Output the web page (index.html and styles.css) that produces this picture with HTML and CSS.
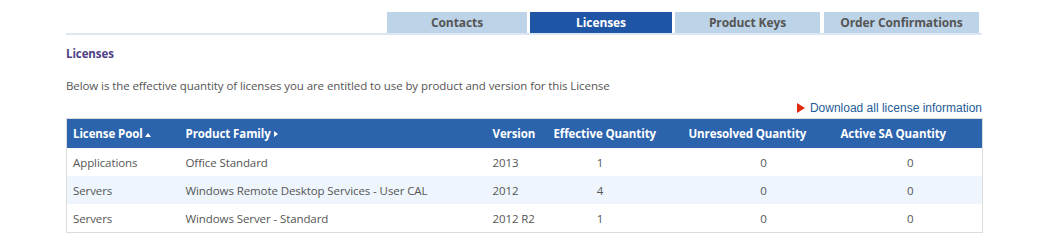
FILE: index.html
```html
<!DOCTYPE html>
<html lang="en">
<head>
    <meta charset="UTF-8">
    <title>Licenses</title>
    <link rel="stylesheet" href="styles.css">
</head>
<body>
    <div class="page">
        <div class="tabs">
            <div class="tab tab-contacts">Contacts</div>
            <div class="tab tab-licenses active">Licenses</div>
            <div class="tab tab-keys">Product Keys</div>
            <div class="tab tab-orders">Order Confirmations</div>
        </div>
        <h2 class="title">Licenses</h2>
        <p class="intro">Below is the effective quantity of licenses you are entitled to use by product and version for this License</p>
        <div class="download">
            <span class="arrow"></span><a href="#">Download all license information</a>
        </div>
        <table class="grid">
            <colgroup>
                <col style="width: 113px">
                <col style="width: 307px">
                <col style="width: 61px">
                <col style="width: 135px">
                <col style="width: 152px">
                <col style="width: 148px">
            </colgroup>
            <thead>
                <tr>
                    <th>License Pool<span class="sort-up"></span></th>
                    <th>Product Family <span class="sort-right"></span></th>
                    <th>Version</th>
                    <th>Effective Quantity</th>
                    <th>Unresolved Quantity</th>
                    <th>Active SA Quantity</th>
                </tr>
            </thead>
            <tbody>
                <tr>
                    <td>Applications</td>
                    <td>Office Standard</td>
                    <td>2013</td>
                    <td class="num eff">1</td>
                    <td class="num unres">0</td>
                    <td class="num sa">0</td>
                </tr>
                <tr class="alt">
                    <td>Servers</td>
                    <td>Windows Remote Desktop Services - User CAL</td>
                    <td>2012</td>
                    <td class="num eff">4</td>
                    <td class="num unres">0</td>
                    <td class="num sa">0</td>
                </tr>
                <tr>
                    <td>Servers</td>
                    <td>Windows Server - Standard</td>
                    <td>2012 R2</td>
                    <td class="num eff">1</td>
                    <td class="num unres">0</td>
                    <td class="num sa">0</td>
                </tr>
            </tbody>
        </table>
    </div>
</body>
</html>
```

FILE: styles.css
```css
body, html {
    margin: 0;
    background-color: #fff;
    color: #555;
    font-family: "Open Sans", Arial, sans-serif;
    font-size: 11.5px;
    letter-spacing: -0.09px;
}

.page {
    width: 916px;
    margin-left: 66px;
    padding-top: 12px;
}

/* Tabs */
.tabs {
    display: flex;
    justify-content: flex-end;
    padding-right: 3px;
    border-bottom: 2px solid #dbe7f3;
}

.tab {
    height: 21px;
    line-height: 21px;
    background-color: #bdd4e8;
    color: #555;
    font-weight: bold;
    font-size: 12px;
    text-align: center;
    margin-left: 3px;
}

.tab-contacts { width: 140px; }
.tab-licenses { width: 142px; }
.tab-keys { width: 145px; }
.tab-orders { width: 155px; margin-left: 4px; }

.tab.active {
    background-color: #1f55a5;
    color: #fff;
}

.title {
    margin: 0;
    padding-top: 11px;
    height: 16px;
    line-height: 16px;
    font-size: 11.5px;
    font-weight: bold;
    color: #4f3f86;
}

.intro {
    margin: 0;
    padding-top: 16px;
    line-height: 16px;
}

.download {
    text-align: right;
    padding-top: 6px;
    height: 16px;
    line-height: 16px;
    font-family: "Liberation Sans", Arial, sans-serif;
    font-size: 12px;
    letter-spacing: 0;
}

.download a {
    color: #1f5c99;
    text-decoration: none;
}

.arrow {
    display: inline-block;
    width: 0;
    height: 0;
    border-top: 5px solid transparent;
    border-bottom: 5px solid transparent;
    border-left: 8px solid #e02a10;
    margin-right: 5px;
    vertical-align: -1px;
}

/* Table */
.grid {
    margin-top: 2px;
    width: 916px;
    table-layout: fixed;
    border-collapse: collapse;
    border: 1px solid #dcdcdc;
}

.grid th {
    background-color: #2b63ad;
    color: #fff;
    font-weight: bold;
    text-align: left;
    height: 29px;
    padding: 0 0 0 6px;
    white-space: nowrap;
}

.grid td {
    height: 28px;
    padding: 0 0 0 6px;
    color: #555;
    white-space: nowrap;
}

.grid tr.alt td {
    background-color: #eef5fd;
}

.grid td.num {
    text-align: center;
    padding: 0;
}

.grid td.eff { padding-right: 30px; }
.grid td.unres { padding-left: 10px; }
.grid td.sa { padding-left: 4px; }

.sort-up {
    display: inline-block;
    width: 0;
    height: 0;
    border-left: 3px solid transparent;
    border-right: 3px solid transparent;
    border-bottom: 4px solid #fff;
    margin-left: 2px;
    vertical-align: 1px;
}

.sort-right {
    display: inline-block;
    width: 0;
    height: 0;
    border-top: 3px solid transparent;
    border-bottom: 3px solid transparent;
    border-left: 4px solid #fff;
    vertical-align: 1px;
}
```
